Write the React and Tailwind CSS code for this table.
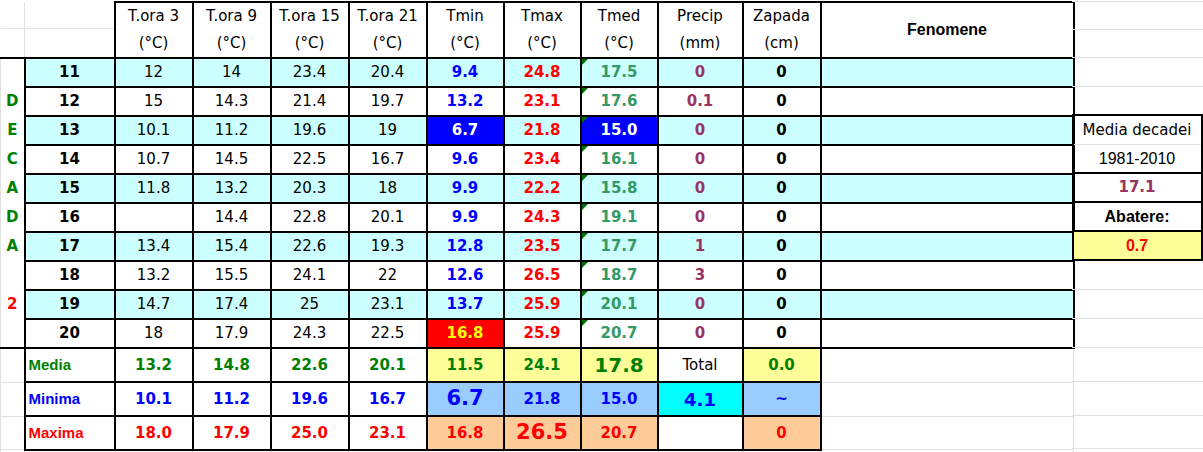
const COMIC = "font-['DejaVu_Sans',sans-serif]";
const ARIAL = "font-['Liberation_Sans',Arial,sans-serif]";
const GRID = "border border-solid border-[#e1e1e1]";
const BOX = "border-2 border-solid border-black";
const LINE = "border-b border-solid border-[#e1e1e1]";

const HEADS = [
  ["T.ora 3", "(°C)"],
  ["T.ora 9", "(°C)"],
  ["T.ora 15", "(°C)"],
  ["T.ora 21", "(°C)"],
  ["Tmin", "(°C)"],
  ["Tmax", "(°C)"],
  ["Tmed", "(°C)"],
  ["Precip", "(mm)"],
  ["Zapada", "(cm)"],
];

const DAYS = [
  { day: 11, letter: "", ora: ["12", "14", "23.4", "20.4"], tmin: "9.4", tmax: "24.8", tmed: "17.5", precip: "0" },
  { day: 12, letter: "D", ora: ["15", "14.3", "21.4", "19.7"], tmin: "13.2", tmax: "23.1", tmed: "17.6", precip: "0.1" },
  { day: 13, letter: "E", ora: ["10.1", "11.2", "19.6", "19"], tmin: "6.7", tmax: "21.8", tmed: "15.0", precip: "0", coldMin: true, coldMed: true },
  { day: 14, letter: "C", ora: ["10.7", "14.5", "22.5", "16.7"], tmin: "9.6", tmax: "23.4", tmed: "16.1", precip: "0" },
  { day: 15, letter: "A", ora: ["11.8", "13.2", "20.3", "18"], tmin: "9.9", tmax: "22.2", tmed: "15.8", precip: "0" },
  { day: 16, letter: "D", ora: ["", "14.4", "22.8", "20.1"], tmin: "9.9", tmax: "24.3", tmed: "19.1", precip: "0" },
  { day: 17, letter: "A", ora: ["13.4", "15.4", "22.6", "19.3"], tmin: "12.8", tmax: "23.5", tmed: "17.7", precip: "1" },
  { day: 18, letter: "", ora: ["13.2", "15.5", "24.1", "22"], tmin: "12.6", tmax: "26.5", tmed: "18.7", precip: "3" },
  { day: 19, letter: "2", ora: ["14.7", "17.4", "25", "23.1"], tmin: "13.7", tmax: "25.9", tmed: "20.1", precip: "0" },
  { day: 20, letter: "", ora: ["18", "17.9", "24.3", "22.5"], tmin: "16.8", tmax: "25.9", tmed: "20.7", precip: "0", hotMin: true },
];

const SUMMARY = [
  {
    label: "Media",
    color: "text-[#008000]",
    ora: ["13.2", "14.8", "22.6", "20.1"],
    cells: [
      { v: "11.5", cls: "bg-[#ffff99] font-bold text-[15px]" },
      { v: "24.1", cls: "bg-[#ffff99] font-bold text-[15px]" },
      { v: "17.8", cls: "bg-[#ffff99] font-bold text-[20px]" },
      { v: "Total", cls: "bg-white text-black text-[15px]" },
      { v: "0.0", cls: "bg-[#ffff99] font-bold text-[15px]" },
    ],
  },
  {
    label: "Minima",
    color: "text-[#0000ff]",
    ora: ["10.1", "11.2", "19.6", "16.7"],
    cells: [
      { v: "6.7", cls: "bg-[#99ccff] font-semibold text-[21px]" },
      { v: "21.8", cls: "bg-[#99ccff] font-bold text-[15px]" },
      { v: "15.0", cls: "bg-[#99ccff] font-bold text-[15px]" },
      { v: "4.1", cls: "bg-[#00ffff] font-semibold text-[18px]" },
      { v: "~", cls: "bg-[#99ccff] font-bold text-[15px]" },
    ],
  },
  {
    label: "Maxima",
    color: "text-[#ff0000]",
    ora: ["18.0", "17.9", "25.0", "23.1"],
    cells: [
      { v: "16.8", cls: "bg-[#ffcc99] font-bold text-[15px]" },
      { v: "26.5", cls: "bg-[#ffcc99] font-semibold text-[21px]" },
      { v: "20.7", cls: "bg-[#ffcc99] font-bold text-[15px]" },
      { v: "", cls: "bg-white" },
      { v: "0", cls: "bg-[#ffcc99] font-bold text-[15px]" },
    ],
  },
];

function Corner() {
  return <span className="absolute left-0 top-0 w-0 h-0 border-t-[6px] border-r-[6px] border-t-[#007000] border-r-transparent" />;
}

// decade normal + deviation box, with the sheet's grid lines above and below it
function SidePanel() {
  return (
    <div className="-ml-[3px] w-[131px] flex flex-col shrink-0">
      <div className={`h-[29px] border-t border-solid border-t-[#e1e1e1] ${LINE}`} />
      <div className={`h-[28px] ${LINE}`} />
      <div className={`h-[29px] ${LINE}`} />
      <div className="h-[27px]" />
      <div className="border-2 border-solid border-black flex flex-col text-center">
        <div className={`h-[29px] ${LINE} flex items-center justify-center ${COMIC} text-[15px]`}>Media decadei</div>
        <div className={`h-[29px] border-b-2 border-solid border-black flex items-center justify-center ${ARIAL} text-[16px]`}>1981-2010</div>
        <div className={`h-[29px] border-b-2 border-solid border-black flex items-center justify-center ${COMIC} text-[15px] font-bold text-[#993366]`}>17.1</div>
        <div className={`h-[29px] border-b-2 border-solid border-black flex items-center justify-center ${ARIAL} text-[16px] font-bold`}>Abatere:</div>
        <div className={`h-[27px] bg-[#ffff99] flex items-center justify-center ${ARIAL} text-[16px] font-bold text-[#ff0000]`}>0.7</div>
      </div>
      <div className={`h-[29px] ${LINE}`} />
      <div className={`h-[29px] ${LINE}`} />
      <div className={`h-[29px] ${LINE}`} />
      <div className={`h-[34px] ${LINE}`} />
      <div className={`h-[34px] ${LINE}`} />
      <div className={`h-[33px] ${LINE}`} />
    </div>
  );
}

export default function App() {
  const widths = ["w-[24px]", "w-[90px]", "w-[78px]", "w-[78px]", "w-[78px]", "w-[78px]", "w-[77px]", "w-[77px]", "w-[77px]", "w-[85px]", "w-[78px]", "w-[253px]"];

  return (
    <div className="w-[1203px] h-[452px] overflow-hidden bg-white pt-[1px] flex items-start">
      <table className={`border-collapse table-fixed w-[1073px] shrink-0 ${COMIC} text-black`}>
        <colgroup>
          {widths.map((w, i) => (
            <col key={i} className={w} />
          ))}
        </colgroup>
        <tbody>
          <tr className="h-[55px]">
            <td className={`${GRID} border-t-0 border-l-0 align-top`}>
              <div className={`h-[27px] ${LINE}`} />
            </td>
            <td className={`${GRID} border-t-0 align-top`}>
              <div className={`h-[27px] ${LINE}`} />
            </td>
            {HEADS.map(([a, b]) => (
              <td key={a} className={`${BOX} text-center text-[15px]`}>
                <div className="leading-[27px]">{a}</div>
                <div className="leading-[27px]">{b}</div>
              </td>
            ))}
            <td className={`${BOX} ${ARIAL} font-bold text-[16px] text-center align-middle`}>Fenomene</td>
          </tr>

          {DAYS.map((r, i) => {
            const tinted = r.day % 2 === 1;
            const rowBg = tinted ? "bg-[#ccffff]" : "bg-white";
            const letterBorder =
              i === 0 ? "border-t-2 border-t-black" : i === DAYS.length - 1 ? "border-b-2 border-b-black" : "";
            return (
              <tr key={r.day} className="h-[29px]">
                <td
                  className={`border-l border-solid border-l-[#e1e1e1] border-r-2 border-r-black ${letterBorder} text-center font-bold text-[15px] ${
                    r.letter === "2" ? "text-[#ff0000]" : "text-[#008000]"
                  }`}
                >
                  {r.letter}
                </td>
                <td className={`${BOX} ${rowBg} text-center font-bold text-[15px]`}>{r.day}</td>
                {r.ora.map((v, j) => (
                  <td key={j} className={`${BOX} ${rowBg} text-center text-[15px]`}>{v}</td>
                ))}
                <td
                  className={`${BOX} text-center font-bold text-[15px] ${
                    r.coldMin ? "bg-[#0000ff] text-white" : r.hotMin ? "bg-[#ff0000] text-[#ffff00]" : `${rowBg} text-[#0000ff]`
                  }`}
                >
                  {r.tmin}
                </td>
                <td className={`${BOX} ${rowBg} text-center font-bold text-[15px] text-[#ff0000]`}>{r.tmax}</td>
                <td
                  className={`${BOX} relative text-center font-bold text-[15px] ${
                    r.coldMed ? "bg-[#0000ff] text-white" : `${rowBg} text-[#339966]`
                  }`}
                >
                  <Corner />
                  {r.tmed}
                </td>
                <td className={`${BOX} ${rowBg} text-center font-bold text-[15px] text-[#993366]`}>{r.precip}</td>
                <td className={`${BOX} ${rowBg} text-center font-bold text-[15px]`}>0</td>
                <td className={`${BOX} ${rowBg}`}></td>
              </tr>
            );
          })}

          {SUMMARY.map((s, i) => (
            <tr key={s.label} className={i === 2 ? "h-[33px]" : "h-[34px]"}>
              <td className={`${GRID} border-r-2 border-r-black`}></td>
              <td className={`${BOX} ${ARIAL} font-bold text-[15px] pl-[3px] ${s.color}`}>{s.label}</td>
              {s.ora.map((v, j) => (
                <td key={j} className={`${BOX} text-center font-bold text-[15px] ${s.color}`}>{v}</td>
              ))}
              {s.cells.map((c, j) => (
                <td key={j} className={`${BOX} text-center ${s.color} ${c.cls}`}>{c.v}</td>
              ))}
              <td className={GRID}></td>
            </tr>
          ))}

          <tr className="h-[8px]">
            {widths.map((w, i) => (
              <td key={i} className={GRID}></td>
            ))}
          </tr>
        </tbody>
      </table>
      <SidePanel />
    </div>
  );
}
